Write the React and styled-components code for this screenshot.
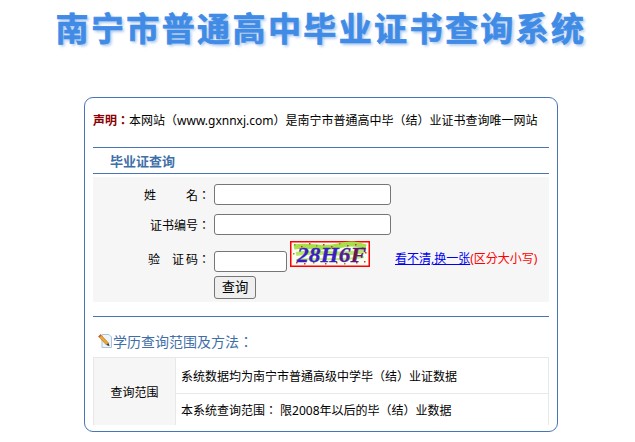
import styled, { createGlobalStyle } from "styled-components";

const GlobalStyle = createGlobalStyle`
  html, body {
    margin: 0;
    padding: 0;
    background: #fff;
  }
  body {
    font-family: "Noto Sans", "Noto Sans CJK TC", sans-serif;
    font-size: 12px;
    color: #000;
  }
`;

const Page = styled.div`
  width: 635px;
  height: 442px;
  overflow: hidden;
`;

const Title = styled.h1`
  margin: 0;
  height: 97px;
  padding: 6px 0 0 7px;
  box-sizing: border-box;
  text-align: center;
  font-family: "Noto Sans CJK SC", sans-serif;
  font-size: 33px;
  line-height: 42px;
  font-weight: 700;
  letter-spacing: 2.4px;
  white-space: nowrap;
  color: #3f8be6;
  -webkit-text-stroke: 0.7px #3f8be6;
  text-shadow: 2px 2px 3px #a9c6ee;
`;

const Panel = styled.div`
  width: 474px;
  height: 335px;
  margin-left: 84px;
  padding: 0 8px;
  box-sizing: border-box;
  border: 1px solid #4a74b8;
  border-radius: 9px;
  overflow: hidden;
`;

const Notice = styled.p`
  margin: 0;
  height: 50px;
  line-height: 45px;
  white-space: nowrap;
  border-bottom: 1px solid #4a74b8;
  box-sizing: border-box;
`;

const NoticeLabel = styled.strong`
  color: #8b0000;
`;

const SectionTitle = styled.h2`
  margin: 0 0 3px;
  height: 26px;
  padding-left: 17px;
  box-sizing: border-box;
  border-bottom: 1px solid #4a74b8;
  font-size: 13px;
  line-height: 26px;
  font-weight: 700;
  color: #3f6fa8;
`;

const FormArea = styled.form`
  height: 125px;
  padding-top: 7px;
  box-sizing: border-box;
  background: #f6f6f6;
  display: grid;
  grid-template-columns: 117px 1fr;
  grid-auto-rows: min-content;
  column-gap: 4px;
`;

const Label = styled.label`
  display: flex;
  justify-content: flex-end;
  align-items: center;
  height: 21px;
  margin-bottom: ${(p) => p.$gap || 0}px;
  margin-top: ${(p) => p.$top || 0}px;
  white-space: pre;
`;

const Field = styled.input`
  display: block;
  width: ${(p) => p.$width}px;
  height: 21px;
  padding: 0;
  box-sizing: border-box;
  border: 1px solid #767676;
  border-radius: 3px;
  background: #fff;
  margin-bottom: ${(p) => p.$gap || 0}px;
`;

const CaptchaRow = styled.div`
  display: flex;
  align-items: flex-start;
  height: 31px;
`;

const CaptchaInput = styled(Field)`
  margin-top: 7px;
`;

const CaptchaBox = styled.svg`
  display: block;
  margin-left: 3px;
  margin-top: -3px;
  flex: none;
`;

const CaptchaHint = styled.span`
  margin-left: 25px;
  margin-top: 3px;
  line-height: 24px;
  white-space: nowrap;
  color: #f00;
`;

const HintLink = styled.a`
  color: #00e;
  text-decoration: underline;
`;

const SubmitButton = styled.button`
  grid-column: 2;
  justify-self: start;
  width: 42px;
  height: 23px;
  padding: 0;
  margin-top: 1px;
  border: 1px solid #767676;
  border-radius: 3px;
  background: #efefef;
  font-size: 13.33px;
  font-family: inherit;
  line-height: 19px;
  color: #000;
`;

const Divider = styled.div`
  margin-top: 14px;
  border-top: 1px solid #4a74b8;
`;

const MethodTitle = styled.h3`
  display: flex;
  align-items: center;
  height: 40px;
  margin: 0;
  padding: 8px 0 0 4px;
  box-sizing: border-box;
  font-size: 14px;
  font-weight: 400;
  color: #3f6fa8;
`;

const ScopeTable = styled.table`
  width: 456px;
  border-collapse: collapse;
  table-layout: fixed;
`;

const ScopeHead = styled.th`
  width: 81px;
  padding: 0;
  font-weight: 400;
  text-align: center;
  background: #f6f6f6;
  border: 1px solid #e8e8e8;
  border-bottom: 0;
`;

const ScopeCell = styled.td`
  height: ${(p) => p.$height}px;
  padding: 0 0 0 5px;
  border: 1px solid #e8e8e8;
  border-bottom-width: ${(p) => (p.$last ? 0 : 1)}px;
  white-space: nowrap;
`;

const PencilIcon = () => (
  <svg width="16" height="16" viewBox="0 0 16 16" aria-hidden="true">
    <path d="M5 1.5h7l2.5 2.5v10.5H5z" fill="#eef5fb" stroke="#a9c3da" />
    <path d="M1.5 3.5 3.5 1.5 11.5 10 9.5 12z" fill="#eda92f" stroke="#b5651d" strokeWidth="0.6" />
    <path d="M9.5 12 11.5 10 12.6 13.2z" fill="#333" />
    <path d="M1.5 3.5 3.5 1.5 4.5 2.6 2.5 4.6z" fill="#d9534f" />
  </svg>
);

const noise = [
  [4, 3], [11, 5], [19, 2], [26, 4], [33, 3], [41, 5], [49, 2], [57, 4], [65, 3], [72, 6],
  [6, 21], [14, 22], [23, 21], [35, 22], [46, 21], [54, 22], [66, 21], [74, 20],
  [3, 12], [75, 11],
];

const Captcha = () => (
  <CaptchaBox width="80" height="26" viewBox="0 0 80 26">
    <rect x="0.75" y="0.75" width="78.5" height="24.5" fill="#fbfdf2" stroke="#f00" strokeWidth="1.5" />
    <path d="M4 6C20 3 32 9 48 5S68 4 76 6" fill="none" stroke="#a8e04a" strokeWidth="5" />
    <path d="M6 13C26 9 50 16 75 10" fill="none" stroke="#b9e868" strokeWidth="4" />
    <path d="M6 19C26 16 40 21 74 16" fill="none" stroke="#c4ee7c" strokeWidth="2" />
    {noise.map(([x, y], i) => (
      <rect key={i} x={x} y={y} width="1.5" height="1.5" fill={i % 3 ? "#c0392b" : "#7a9a2e"} />
    ))}
    <text
      transform="translate(7 21) scale(1.12 1)"
      fontFamily="Liberation Serif, serif"
      fontSize="21"
      fontWeight="700"
      fontStyle="italic"
      stroke="currentColor"
      strokeWidth="0.3"
      fill="#3a1fc0"
      color="#3a1fc0"
    >
      28H<tspan fill="#5a1a8c">6</tspan><tspan fill="#6b1540">F</tspan>
    </text>
  </CaptchaBox>
);

export default function App() {
  return (
    <Page>
      <GlobalStyle />
      <Title>南宁市普通高中毕业证书查询系统</Title>
      <Panel>
        <Notice>
          <NoticeLabel>声明：</NoticeLabel>本网站（www.gxnnxj.com）是南宁市普通高中毕（结）业证书查询唯一网站
        </Notice>
        <SectionTitle>毕业证查询</SectionTitle>
        <FormArea onSubmit={(e) => e.preventDefault()}>
          <Label $gap={9}>姓&emsp;&emsp;&ensp;名：</Label>
          <Field $width={177} $gap={9} />
          <Label $gap={9}>证书编号：</Label>
          <Field $width={177} $gap={9} />
          <Label $top={4}>验&emsp;证&thinsp;码：</Label>
          <CaptchaRow>
            <CaptchaInput $width={73} />
            <Captcha />
            <CaptchaHint>
              <HintLink href="#">看不清,换一张</HintLink>(区分大小写)
            </CaptchaHint>
          </CaptchaRow>
          <SubmitButton type="submit">查询</SubmitButton>
        </FormArea>
        <Divider />
        <MethodTitle>
          <PencilIcon />
          学历查询范围及方法：
        </MethodTitle>
        <ScopeTable>
          <tbody>
            <tr>
              <ScopeHead rowSpan={2}>查询范围</ScopeHead>
              <ScopeCell $height={35}>系统数据均为南宁市普通高级中学毕（结）业证数据</ScopeCell>
            </tr>
            <tr>
              <ScopeCell $height={31} $last>本系统查询范围： 限2008年以后的毕（结）业数据</ScopeCell>
            </tr>
          </tbody>
        </ScopeTable>
      </Panel>
    </Page>
  );
}
